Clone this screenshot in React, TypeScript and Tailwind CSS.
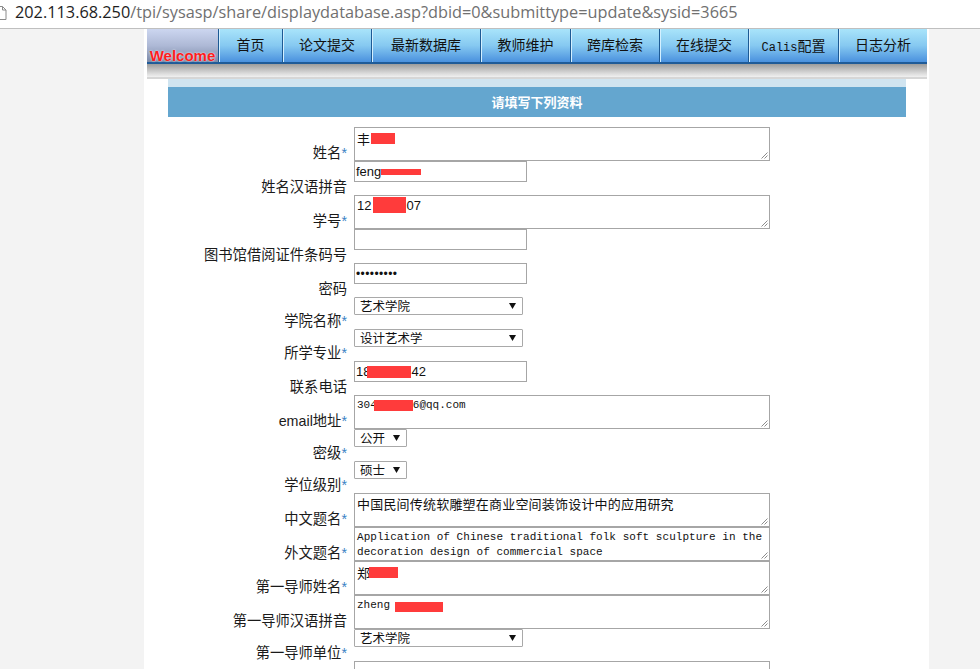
import React from 'react';

const SANS = "font-['Liberation_Sans','Noto_Sans_CJK_SC',sans-serif]";
const CJK = "font-['Noto_Sans_CJK_SC','Liberation_Sans',sans-serif]";
const MONO = "font-['Liberation_Mono','Noto_Sans_CJK_SC',monospace]";

function R({ c }: { c: string }) {
  return <span className={`block shrink-0 bg-[#ff3b3b] ${c}`} />;
}

function Grip() {
  return (
    <svg className="absolute right-[1px] bottom-[1px]" width="8" height="8" viewBox="0 0 8 8">
      <path d="M7.5 1.5 L1.5 7.5 M7.5 4.5 L4.5 7.5" stroke="#8c8c8c" strokeWidth="1" fill="none" />
    </svg>
  );
}

function TA({ pt, children }: { pt: string; children?: React.ReactNode }) {
  return (
    <div className={`relative w-[416px] h-[34px] border border-[#a6a6a6] bg-white pl-[2px] ${pt} overflow-hidden text-[#111]`}>
      {children}
      <Grip />
    </div>
  );
}

function Input({ children }: { children?: React.ReactNode }) {
  return (
    <div className={`w-[173px] h-[21px] border border-[#a6a6a6] bg-white pl-[1px] flex items-center text-[13px] leading-[15px] text-[#111] ${SANS}`}>
      {children}
    </div>
  );
}

function Arrow() {
  return (
    <svg width="7" height="6" viewBox="0 0 7 6" className="shrink-0">
      <path d="M0 0 H7 L3.5 6 Z" fill="#111" />
    </svg>
  );
}

function Select({ w, text }: { w: string; text: string }) {
  return (
    <div className={`${w} h-[18px] border border-[#a9a9a9] rounded-[1px] bg-white pl-[5px] pr-[6px] flex items-center justify-between text-[12.5px] leading-[14px] text-[#111] ${CJK}`}>
      <span>{text}</span>
      <Arrow />
    </div>
  );
}

function Row({ label, req, h, children }: { label: string; req?: boolean; h: string; children?: React.ReactNode }) {
  return (
    <div className={`flex ${h}`}>
      <div className={`w-[182px] pr-[3px] flex items-end justify-end text-[14.3px] leading-[16px] text-[#1a1a1a] whitespace-nowrap ${SANS}`}>
        <span>{label}</span>
        {req && <span className="text-[#3a82c4]">*</span>}
      </div>
      <div className="pl-[4px]">{children}</div>
    </div>
  );
}

const NAV: { t: string; w: string }[] = [
  { t: '首页', w: 'w-[64px]' },
  { t: '论文提交', w: 'w-[89px]' },
  { t: '最新数据库', w: 'w-[109px]' },
  { t: '教师维护', w: 'w-[90px]' },
  { t: '跨库检索', w: 'w-[89px]' },
  { t: '在线提交', w: 'w-[89px]' },
  { t: 'Calis配置', w: 'w-[90px]' },
  { t: '日志分析', w: 'w-[89px]' },
];

export default function App() {
  return (
    <div className="w-[980px] h-[669px] overflow-hidden bg-[#f3f3f3]">
      {/* address bar */}
      <div className="h-[29px] bg-white border-b border-[#bfbfbf] flex items-start overflow-hidden">
        <svg width="12" height="14" viewBox="0 0 12 14" className="ml-[-5px] mt-[6px] shrink-0">
          <path d="M1 0.5 H7.5 L11 4 V13.5 H1 Z M7.5 0.5 V4 H11" stroke="#8a8a8a" strokeWidth="1" fill="#fff" />
        </svg>
        <div className="ml-[8px] pt-[1px] text-[16.3px] leading-[22px] whitespace-nowrap font-['Open_Sans',sans-serif]">
          <span className="text-[#1e1e1e]">202.113.68.250</span>
          <span className="text-[#707070]">/tpi/sysasp/share/displaydatabase.asp?dbid=0&amp;submittype=update&amp;sysid=3665</span>
        </div>
      </div>

      <div className="flex">
        <div className="w-[144px] shrink-0" />
        <div className="w-[785px] h-[640px] bg-white shrink-0">
          {/* nav */}
          <div className="ml-[3px] w-[780px]">
            <div className="flex h-[33px]">
              <div className="w-[71px] flex items-end justify-center bg-[linear-gradient(#ccd6f0,#aeb9d6_50%,#7c8aa8)]">
                <span className="text-[15px] leading-[12px] font-bold text-[#ff1c1c] font-['Liberation_Sans',sans-serif] [text-shadow:0_0_2px_#ffffff]">
                  Welcome
                </span>
              </div>
              {NAV.map((n) => (
                <div
                  key={n.t}
                  className={`${n.w} flex items-center justify-center border-l border-[#1d5a94] shadow-[inset_1px_0_0_#d4f0ff] bg-[linear-gradient(#a9e4fa,#86c9f1_50%,#4a91de)] text-[14px] text-[#111] ${SANS}`}
                >
                  {n.t === 'Calis配置' ? (
                    <span>
                      <span className="font-['Liberation_Mono',monospace] text-[12px]">Calis</span>
                      <span className={CJK}>配置</span>
                    </span>
                  ) : (
                    n.t
                  )}
                </div>
              ))}
            </div>
            <div className="h-[2px] bg-[#1f5b98]" />
            <div className="h-[13px] bg-[linear-gradient(#9c9c9c,#d9d9d9_70%,#f0f0f0)]" />
            <div className="h-[2px] bg-[#d6d6d6]" />
          </div>

          {/* form */}
          <div className="ml-[24px] w-[738px]">
            <div className="h-[8px] bg-[#d0e4f0]" />
            <div className={`h-[30px] bg-[#64a6cf] flex items-center justify-center text-white text-[13px] font-bold ${CJK}`}>
              请填写下列资料
            </div>
            <div className="h-[10px]" />

            <Row label="姓名" req h="h-[34px]">
              <TA pt="pt-[3px]">
                <div className={`flex items-start text-[13px] leading-[15px] ${CJK}`}>
                  <span>丰</span>
                  <R c="w-[24px] h-[11px] mt-[2px] ml-[1px]" />
                </div>
              </TA>
            </Row>
            <Row label="姓名汉语拼音" h="h-[34px]">
              <Input>
                <span>feng</span>
                <R c="w-[40px] h-[6px] mt-[1px]" />
              </Input>
            </Row>
            <Row label="学号" req h="h-[34px]">
              <TA pt="pt-[2px]">
                <div className={`flex items-start text-[13px] leading-[15px] ${SANS}`}>
                  <span>12</span>
                  <R c="w-[33px] h-[16px] mt-[-1px] ml-[2px]" />
                  <span>07</span>
                </div>
              </TA>
            </Row>
            <Row label="图书馆借阅证件条码号" h="h-[34px]">
              <Input />
            </Row>
            <Row label="密码" h="h-[34px]">
              <Input>
                <span className="text-[12px] tracking-[0.4px] pt-[1px]">•••••••••</span>
              </Input>
            </Row>
            <Row label="学院名称" req h="h-[32px]">
              <Select w="w-[169px]" text="艺术学院" />
            </Row>
            <Row label="所学专业" req h="h-[32px]">
              <Select w="w-[169px]" text="设计艺术学" />
            </Row>
            <Row label="联系电话" h="h-[34px]">
              <Input>
                <span>18</span>
                <R c="w-[44px] h-[12px] ml-[-3px]" />
                <span>42</span>
              </Input>
            </Row>
            <Row label="email地址" req h="h-[34px]">
              <TA pt="pt-[2px]">
                <div className={`flex items-start text-[11px] leading-[15px] ${MONO}`}>
                  <span>304</span>
                  <R c="w-[39px] h-[11px] mt-[2px] ml-[-3px]" />
                  <span>6@qq.com</span>
                </div>
              </TA>
            </Row>
            <Row label="密级" req h="h-[32px]">
              <Select w="w-[53px]" text="公开" />
            </Row>
            <Row label="学位级别" req h="h-[32px]">
              <Select w="w-[53px]" text="硕士" />
            </Row>
            <Row label="中文题名" req h="h-[34px]">
              <TA pt="pt-[2px]">
                <div className={`text-[13px] leading-[15px] tracking-[0.2px] ${CJK}`}>
                  中国民间传统软雕塑在商业空间装饰设计中的应用研究
                </div>
              </TA>
            </Row>
            <Row label="外文题名" req h="h-[34px]">
              <TA pt="pt-[2px]">
                <div className={`text-[11px] leading-[15px] tracking-[0.04px] whitespace-pre ${MONO}`}>
                  {'Application of Chinese traditional folk soft sculpture in the\ndecoration design of commercial space'}
                </div>
              </TA>
            </Row>
            <Row label="第一导师姓名" req h="h-[34px]">
              <TA pt="pt-[3px]">
                <div className={`flex items-start text-[13px] leading-[15px] ${CJK}`}>
                  <span>郑</span>
                  <R c="w-[29px] h-[11px] mt-[2px] ml-[-1px]" />
                </div>
              </TA>
            </Row>
            <Row label="第一导师汉语拼音" h="h-[34px]">
              <TA pt="pt-[2px]">
                <div className={`flex items-start text-[11px] leading-[15px] ${MONO}`}>
                  <span className="whitespace-pre">zheng </span>
                  <R c="w-[48px] h-[10px] mt-[4px] ml-[-2px]" />
                </div>
              </TA>
            </Row>
            <Row label="第一导师单位" req h="h-[32px]">
              <Select w="w-[169px]" text="艺术学院" />
            </Row>
            <Row label="" h="h-[34px]">
              <TA pt="pt-[2px]" />
            </Row>
          </div>
        </div>
      </div>
    </div>
  );
}
